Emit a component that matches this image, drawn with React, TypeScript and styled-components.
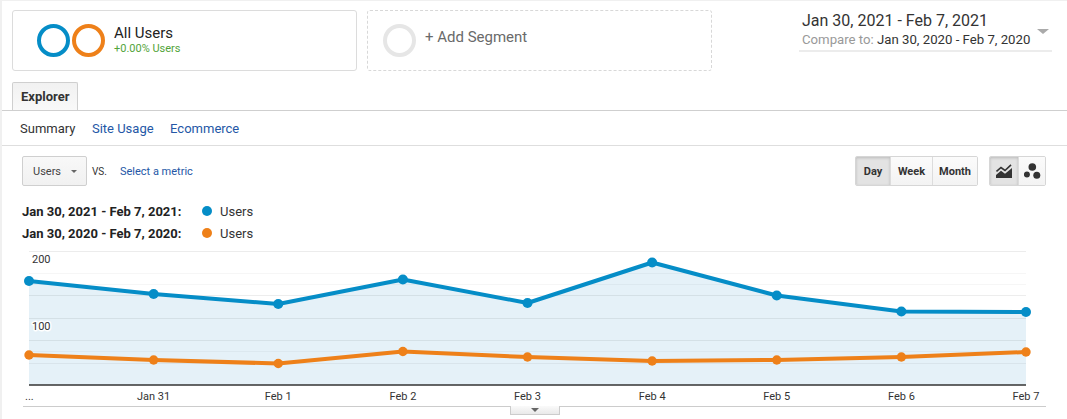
import React from "react";
import styled, { createGlobalStyle } from "styled-components";

const GlobalStyle = createGlobalStyle`
  html, body { margin: 0; padding: 0; }
  body {
    background: #f0f0f0;
    font-family: Roboto, "Liberation Sans", Arial, sans-serif;
    color: #333;
  }
  * { box-sizing: border-box; }
`;

const Page = styled.div`
  margin: 1px 0 0 2px;
  background: #fff;
  height: 418px;
  overflow: hidden;
`;

const Header = styled.div`
  display: flex;
  align-items: flex-start;
  padding: 9px 15px 0 10px;
`;

const SegmentCard = styled.div<{ $dashed?: boolean }>`
  width: 345px;
  height: 61px;
  border: 1px ${(p) => (p.$dashed ? "dashed #d8d8d8" : "solid #dcdcdc")};
  border-radius: 3px;
  display: flex;
  align-items: center;
  padding-left: ${(p) => (p.$dashed ? "15px" : "24px")};
  margin-left: ${(p) => (p.$dashed ? "10px" : "0")};
`;

const Ring = styled.div<{ $color: string }>`
  width: 33px;
  height: 33px;
  border-radius: 50%;
  border: 4px solid ${(p) => p.$color};
  flex: none;
  & + & { margin-left: 2px; }
`;

const SegText = styled.div`
  margin-left: 9px;
  display: flex;
  flex-direction: column;
  margin-top: -2px;
`;

const SegTitle = styled.div`
  font-size: 15px;
  line-height: 18px;
  color: #222;
`;

const SegSub = styled.div`
  font-size: 11px;
  line-height: 14px;
  color: #52a43a;
`;

const AddSeg = styled.div`
  margin-left: 9px;
  margin-bottom: 7px;
  font-size: 15px;
  color: #6a6a6a;
`;

const DateBlock = styled.div`
  margin-left: auto;
  width: 253px;
  display: flex;
  align-items: center;
  justify-content: space-between;
  padding: 1px 3px 2px 3px;
  border-bottom: 2px solid #ececec;
`;

const DateMain = styled.div`
  font-size: 16px;
  line-height: 20px;
  color: #333;
`;

const DateCompare = styled.div`
  font-size: 13.2px;
  line-height: 17px;
  color: #333;
`;

const Muted = styled.span`
  color: #999;
`;

const Caret = styled.div<{ $size: number; $color: string }>`
  width: 0;
  height: 0;
  border-left: ${(p) => p.$size}px solid transparent;
  border-right: ${(p) => p.$size}px solid transparent;
  border-top: ${(p) => Math.round(p.$size * 0.9)}px solid ${(p) => p.$color};
  flex: none;
`;

const DateCaret = styled(Caret)`
  margin-top: 3px;
`;

const TabBar = styled.div`
  margin-top: 11px;
  padding-left: 10px;
  border-bottom: 1px solid #cfcfcf;
  display: flex;
`;

const Tab = styled.div`
  width: 66px;
  height: 28px;
  border: 1px solid #cfcfcf;
  border-bottom: none;
  border-radius: 2px 2px 0 0;
  background: linear-gradient(#f1f1f1, #f9f9f9);
  font-weight: 700;
  font-size: 13px;
  line-height: 27px;
  padding-left: 8px;
  color: #333;
`;

const SubTabs = styled.div`
  height: 35px;
  border-bottom: 1px solid #dedede;
  display: flex;
  align-items: center;
  gap: 16.5px;
  padding-left: 18px;
  font-size: 13px;
  line-height: 35px;
`;

const SubTab = styled.span<{ $active?: boolean }>`
  color: ${(p) => (p.$active ? "#333" : "#2457a6")};
`;

const Controls = styled.div`
  margin-top: 10px;
  padding: 0 21px 0 20px;
  height: 30px;
  display: flex;
  align-items: center;
`;

const Dropdown = styled.div`
  width: 65px;
  height: 30px;
  border: 1px solid #cfcfcf;
  border-radius: 2px;
  background: linear-gradient(#f8f8f8, #f1f1f1);
  display: flex;
  align-items: center;
  padding: 0 9px 0 10px;
  font-size: 11px;
  color: #444;
  justify-content: space-between;
`;

const Vs = styled.span`
  margin-left: 5px;
  font-size: 10px;
  color: #333;
  margin-top: 1px;
`;

const MetricLink = styled.span`
  margin-left: 13px;
  font-size: 11px;
  color: #2457a6;
`;

const BtnGroup = styled.div<{ $first?: boolean }>`
  display: flex;
  height: 30px;
  border: 1px solid #d6d6d6;
  border-radius: 2px;
  overflow: hidden;
  margin-left: ${(p) => (p.$first ? "auto" : "11px")};
`;

const Btn = styled.div<{ $active?: boolean; $w: number }>`
  width: ${(p) => p.$w}px;
  display: flex;
  align-items: center;
  justify-content: center;
  font-size: 11px;
  font-weight: 700;
  color: #333;
  background: ${(p) => (p.$active ? "#e3e3e3" : "linear-gradient(#fbfbfb, #f3f3f3)")};
  box-shadow: ${(p) => (p.$active ? "inset 0 1px 3px rgba(0,0,0,0.18)" : "none")};
  & + & { border-left: 1px solid #dcdcdc; }
`;

const Legend = styled.div`
  margin-top: 14px;
  padding-left: 20px;
`;

const LegendRow = styled.div`
  display: flex;
  align-items: center;
  height: 22px;
`;

const LegendLabel = styled.span`
  width: 180px;
  font-size: 13px;
  font-weight: 700;
  color: #222;
`;

const Dot = styled.span<{ $color: string }>`
  width: 10px;
  height: 10px;
  border-radius: 50%;
  background: ${(p) => p.$color};
  margin-right: 8px;
`;

const LegendName = styled.span`
  font-size: 13px;
  color: #333;
`;

const ChartWrap = styled.div`
  margin: 1px 21px 0 21px;
  height: 162px;
  border-bottom: 1px solid #cccccc;
`;

const Handle = styled.div`
  width: 50px;
  height: 9px;
  margin: -1px auto 0;
  border: 1px solid #cccccc;
  border-top: none;
  background: linear-gradient(#fafafa, #e9e9e9);
  display: flex;
  justify-content: center;
  padding-top: 2px;
`;

const BLUE = "#058dc7";
const ORANGE = "#ee8019";

const blueY = [281, 294, 304, 279.5, 303, 262.5, 295.5, 311.5, 312];
const orangeY = [355, 360, 363.5, 351.5, 357, 361, 360, 357, 352];
const labels = ["...", "Jan 31", "Feb 1", "Feb 2", "Feb 3", "Feb 4", "Feb 5", "Feb 6", "Feb 7"];

const X = (i: number) => 6 + i * 124.625;
const Y = (y: number) => y - 245;

const Chart: React.FC = () => {
  const blue = blueY.map((y, i) => `${X(i)},${Y(y)}`).join(" ");
  const orange = orangeY.map((y, i) => `${X(i)},${Y(y)}`).join(" ");
  const area = `M${X(0)},${Y(385)} L${blue.split(" ").join(" L")} L${X(8)},${Y(385)} Z`;
  const grid: [number, string][] = [
    [251, "#ececec"],
    [273, "rgba(0,0,0,0.035)"],
    [284, "rgba(0,0,0,0.035)"],
    [295, "rgba(0,0,0,0.07)"],
    [318, "rgba(0,0,0,0.07)"],
    [340, "rgba(0,0,0,0.07)"],
    [351, "rgba(0,0,0,0.035)"],
    [363, "rgba(0,0,0,0.05)"],
  ];
  return (
    <svg width="1023" height="161" viewBox="0 0 1023 161" style={{ display: "block" }}>
      <path d={area} fill="#e5f1f8" />
      {grid.map(([y, c]) => (
        <line key={y} x1={X(0)} x2={X(8)} y1={Y(y) + 0.5} y2={Y(y) + 0.5} stroke={c} strokeWidth="1" />
      ))}
      <line x1={X(0)} x2={X(8)} y1={Y(385)} y2={Y(385)} stroke="#333" strokeWidth="1.5" />
      <text x="9" y="18" fontSize="11" fill="#333" fontFamily="Roboto, Arial, sans-serif">200</text>
      <text x="9" y="85" fontSize="11" fill="#333" fontFamily="Roboto, Arial, sans-serif"
        stroke="#fff" strokeWidth="3" paintOrder="stroke" strokeLinejoin="round">100</text>
      <polyline points={blue} fill="none" stroke={BLUE} strokeWidth="4" strokeLinejoin="round" />
      {blueY.map((y, i) => (
        <circle key={i} cx={X(i)} cy={Y(y)} r="5" fill={BLUE} />
      ))}
      <polyline points={orange} fill="none" stroke={ORANGE} strokeWidth="4" strokeLinejoin="round" />
      {orangeY.map((y, i) => (
        <circle key={i} cx={X(i)} cy={Y(y)} r="4.7" fill={ORANGE} />
      ))}
      {labels.map((l, i) => (
        <text
          key={l}
          x={i === 0 ? 2 : X(i)}
          y="155"
          fontSize="11"
          fill="#333"
          textAnchor={i === 0 ? "start" : "middle"}
          fontFamily="Roboto, Arial, sans-serif"
        >
          {l}
        </text>
      ))}
    </svg>
  );
};

const LineChartIcon = () => (
  <svg width="16" height="14" viewBox="0 0 16 14">
    <path d="M0.5 7.5 L5 3.5 L9 6.5 L15 0.8" fill="none" stroke="#333" strokeWidth="1.6" />
    <path d="M0 14 L0 11 L5 6.8 L9 9.8 L16 4 L16 14 Z" fill="#333" />
  </svg>
);

const MotionIcon = () => (
  <svg width="17" height="16" viewBox="0 0 17 16">
    <circle cx="8.3" cy="4" r="3.8" fill="#333" />
    <circle cx="2.9" cy="11.6" r="3" fill="#333" />
    <circle cx="12.8" cy="12.3" r="3.5" fill="#333" />
  </svg>
);

export default function App() {
  return (
    <>
      <GlobalStyle />
      <Page>
        <Header>
          <SegmentCard>
            <Ring $color={BLUE} />
            <Ring $color={ORANGE} />
            <SegText>
              <SegTitle>All Users</SegTitle>
              <SegSub>+0.00% Users</SegSub>
            </SegText>
          </SegmentCard>
          <SegmentCard $dashed>
            <Ring $color="#e6e6e6" />
            <AddSeg>+ Add Segment</AddSeg>
          </SegmentCard>
          <DateBlock>
            <div>
              <DateMain>Jan 30, 2021 - Feb 7, 2021</DateMain>
              <DateCompare>
                <Muted>Compare to: </Muted>Jan 30, 2020 - Feb 7, 2020
              </DateCompare>
            </div>
            <DateCaret $size={6} $color="#aaa" />
          </DateBlock>
        </Header>

        <TabBar>
          <Tab>Explorer</Tab>
        </TabBar>
        <SubTabs>
          <SubTab $active>Summary</SubTab>
          <SubTab>Site Usage</SubTab>
          <SubTab>Ecommerce</SubTab>
        </SubTabs>

        <Controls>
          <Dropdown>
            <span>Users</span>
            <Caret $size={3.5} $color="#666" />
          </Dropdown>
          <Vs>VS.</Vs>
          <MetricLink>Select a metric</MetricLink>
          <BtnGroup $first>
            <Btn $active $w={34}>Day</Btn>
            <Btn $w={42}>Week</Btn>
            <Btn $w={45}>Month</Btn>
          </BtnGroup>
          <BtnGroup>
            <Btn $active $w={28}><LineChartIcon /></Btn>
            <Btn $w={27}><MotionIcon /></Btn>
          </BtnGroup>
        </Controls>

        <Legend>
          <LegendRow>
            <LegendLabel>Jan 30, 2021 - Feb 7, 2021:</LegendLabel>
            <Dot $color={BLUE} />
            <LegendName>Users</LegendName>
          </LegendRow>
          <LegendRow>
            <LegendLabel>Jan 30, 2020 - Feb 7, 2020:</LegendLabel>
            <Dot $color={ORANGE} />
            <LegendName>Users</LegendName>
          </LegendRow>
        </Legend>

        <ChartWrap>
          <Chart />
        </ChartWrap>
        <Handle>
          <Caret $size={4} $color="#666" />
        </Handle>
      </Page>
    </>
  );
}
